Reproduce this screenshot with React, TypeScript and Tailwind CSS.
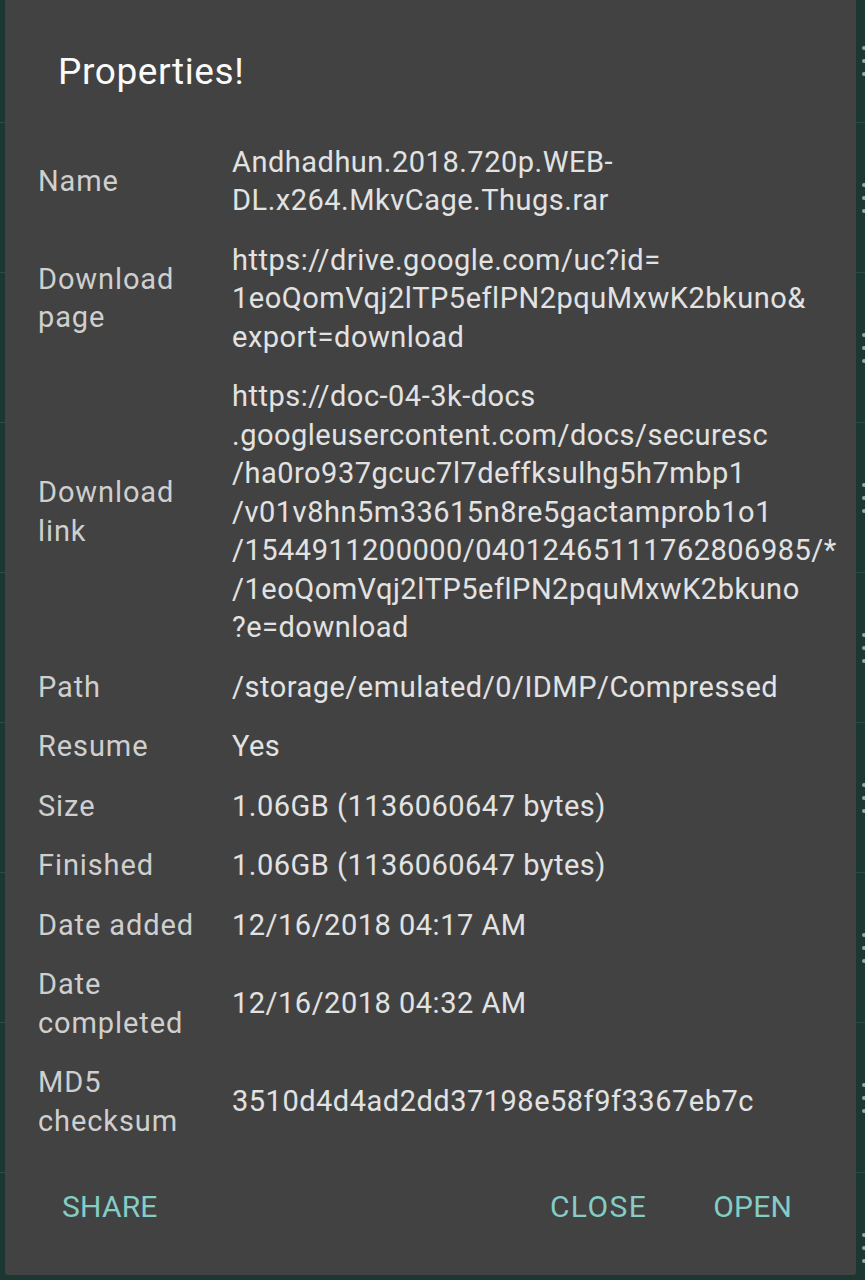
import React from 'react';

type Row = { label: string[]; value: string[] };

const rows: Row[] = [
  { label: ['Name'], value: ['Andhadhun.2018.720p.WEB-', 'DL.x264.MkvCage.Thugs.rar'] },
  {
    label: ['Download', 'page'],
    value: ['https://drive.google.com/uc?id=', '1eoQomVqj2lTP5eflPN2pquMxwK2bkuno&', 'export=download'],
  },
  {
    label: ['Download', 'link'],
    value: [
      'https://doc-04-3k-docs',
      '.googleusercontent.com/docs/securesc',
      '/ha0ro937gcuc7l7deffksulhg5h7mbp1',
      '/v01v8hn5m33615n8re5gactamprob1o1',
      '/1544911200000/04012465111762806985/*',
      '/1eoQomVqj2lTP5eflPN2pquMxwK2bkuno',
      '?e=download',
    ],
  },
  { label: ['Path'], value: ['/storage/emulated/0/IDMP/Compressed'] },
  { label: ['Resume'], value: ['Yes'] },
  { label: ['Size'], value: ['1.06GB (1136060647 bytes)'] },
  { label: ['Finished'], value: ['1.06GB (1136060647 bytes)'] },
  { label: ['Date added'], value: ['12/16/2018 04:17 AM'] },
  { label: ['Date', 'completed'], value: ['12/16/2018 04:32 AM'] },
  { label: ['MD5', 'checksum'], value: ['3510d4d4ad2dd37198e58f9f3367eb7c'] },
];

// list rows peeking out behind the dialog
const bgRows = [0, 1, 2, 3, 4, 5, 6, 7, 8];

function Dots() {
  return (
    <div className="flex flex-col gap-[9px] pl-[2px]">
      <span className="block w-[4px] h-[4px] rounded-full bg-[#9aa5a2]" />
      <span className="block w-[4px] h-[4px] rounded-full bg-[#9aa5a2]" />
      <span className="block w-[4px] h-[4px] rounded-full bg-[#9aa5a2]" />
    </div>
  );
}

export default function App() {
  return (
    <div
      className="w-[865px] h-[1280px] overflow-hidden bg-[#1c3732] flex"
      style={{ fontFamily: 'Roboto, "Open Sans", sans-serif' }}
    >
      {/* left strip of the list behind */}
      <div className="w-[5px] flex flex-col shrink-0">
        <div className="h-[122px] shrink-0" />
        {bgRows.map((i) => (
          <div key={i} className="h-[150px] shrink-0 border-t border-[#2e4a45]" />
        ))}
      </div>

      {/* dialog */}
      <div className="flex-1 h-[1275px] bg-[#424242] rounded-b-[3px] flex flex-col">
        <div className="pt-[52px] pl-[53px] text-[37px] leading-[40px] tracking-[0.6px] text-[#fafafa]">
          Properties!
        </div>

        <div className="mt-[40px] pl-[33px] pr-[10px] flex flex-col">
          {rows.map((row) => (
            <div key={row.label.join(' ')} className="flex items-center py-[10.5px]">
              <div className="w-[194px] shrink-0 text-[29px] leading-[38.5px] tracking-[0.9px] text-[#cfcfcf]">
                {row.label.map((l) => (
                  <div key={l} className="whitespace-nowrap">{l}</div>
                ))}
              </div>
              <div className="flex-1 text-[29px] leading-[38.5px] tracking-[0.5px] text-[#e2e2e2]">
                {row.value.map((v, i) => (
                  <div key={i} className="whitespace-nowrap">{v}</div>
                ))}
              </div>
            </div>
          ))}
        </div>

        <div className="mt-[26px] h-[60px] flex items-center pl-[57px] pr-[64px] text-[30px] text-[#85cdc4] tracking-[0.2px]">
          <button className="uppercase">Share</button>
          <div className="flex-1" />
          <button className="uppercase tracking-[1.4px]">Close</button>
          <button className="uppercase ml-[66px]">Open</button>
        </div>
      </div>

      {/* right strip of the list behind */}
      <div className="w-[9px] flex flex-col shrink-0">
        <div className="h-[122px] shrink-0 flex items-center pl-[4px]">
          <Dots />
        </div>
        {bgRows.map((i) => (
          <div key={i} className="h-[150px] shrink-0 border-t border-[#2e4a45] flex items-center pl-[4px]">
            <Dots />
          </div>
        ))}
      </div>
    </div>
  );
}
